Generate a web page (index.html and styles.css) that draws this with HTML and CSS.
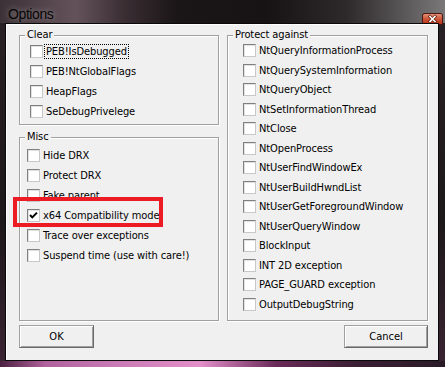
FILE: index.html
```html
<!DOCTYPE html>
<html lang="en">
<head>
    <meta charset="UTF-8">
    <title>Options</title>
    <link rel="stylesheet" href="styles.css">
</head>
<body>
    <div class="window">
        <div class="titlebar">
            <span class="title">Options</span>
            <span class="close">
                <svg width="19" height="10" viewBox="0 0 19 10">
                    <path d="M7 2.5 L12 7.5 M12 2.5 L7 7.5" stroke="#5a1408" stroke-width="3" stroke-linecap="square"/>
                    <path d="M7 2.5 L12 7.5 M12 2.5 L7 7.5" stroke="#fff" stroke-width="1.6" stroke-linecap="square"/>
                </svg>
            </span>
        </div>
        <div class="client">
            <div class="columns">
                <div class="col-left">
                    <div class="group group-clear">
                        <div class="group-title">Clear</div>
                        <label class="check"><span class="box"></span><span class="focus">PEB!IsDebugged</span></label>
                        <label class="check"><span class="box"></span>PEB!NtGlobalFlags</label>
                        <label class="check"><span class="box"></span>HeapFlags</label>
                        <label class="check"><span class="box"></span>SeDebugPrivelege</label>
                    </div>
                    <div class="group group-misc">
                        <div class="group-title">Misc</div>
                        <label class="check"><span class="box"></span>Hide DRX</label>
                        <label class="check"><span class="box"></span>Protect DRX</label>
                        <label class="check"><span class="box"></span>Fake parent</label>
                        <label class="check marked">
                            <span class="box">
                                <svg width="11" height="11" viewBox="0 0 11 11">
                                    <path d="M2 5 L4.3 7.4 L9 2.6" fill="none" stroke="#000" stroke-width="2"/>
                                </svg>
                            </span>x64 Compatibility mode
                        </label>
                        <label class="check"><span class="box"></span>Trace over exceptions</label>
                        <label class="check"><span class="box"></span>Suspend time (use with care!)</label>
                    </div>
                </div>
                <div class="group group-protect">
                    <div class="group-title">Protect against</div>
                    <label class="check"><span class="box"></span>NtQueryInformationProcess</label>
                    <label class="check"><span class="box"></span>NtQuerySystemInformation</label>
                    <label class="check"><span class="box"></span>NtQueryObject</label>
                    <label class="check"><span class="box"></span>NtSetInformationThread</label>
                    <label class="check"><span class="box"></span>NtClose</label>
                    <label class="check"><span class="box"></span>NtOpenProcess</label>
                    <label class="check"><span class="box"></span>NtUserFindWindowEx</label>
                    <label class="check"><span class="box"></span>NtUserBuildHwndList</label>
                    <label class="check"><span class="box"></span>NtUserGetForegroundWindow</label>
                    <label class="check"><span class="box"></span>NtUserQueryWindow</label>
                    <label class="check"><span class="box"></span>BlockInput</label>
                    <label class="check"><span class="box"></span>INT 2D exception</label>
                    <label class="check"><span class="box"></span>PAGE_GUARD exception</label>
                    <label class="check"><span class="box"></span>OutputDebugString</label>
                </div>
            </div>
            <div class="buttons">
                <button class="btn btn-ok">OK</button>
                <button class="btn btn-cancel">Cancel</button>
            </div>
            <div class="highlight"></div>
        </div>
        <div class="frame-bottom"></div>
    </div>
</body>
</html>
```

FILE: styles.css
```css
body {
    margin: 0;
    padding: 0;
    background: #231c20;
}

.window {
    width: 445px;
    height: 367px;
    display: flex;
    flex-direction: column;
    background: linear-gradient(180deg, #2a2226 0%, #1c1719 60%, #3a2432 100%);
}

.titlebar {
    height: 23px;
    display: flex;
    justify-content: space-between;
    background: linear-gradient(90deg, #3b3136 0%, #64525a 17%, #3a2e33 28%, #1a1517 40%, #171314 60%, #2e2a2c 78%, #6c6a6b 96%, #7a7879 100%);
}

.title {
    padding: 6px 0 0 8px;
    font-family: "Liberation Sans", Arial, sans-serif;
    font-size: 14px;
    line-height: 16px;
    letter-spacing: -0.4px;
    color: #050505;
    text-shadow: 0 0 6px rgba(255, 255, 255, 0.45);
}

.close {
    width: 19px;
    height: 10px;
    margin: 14px 3px 0 0;
    border-radius: 2px 2px 0 0;
    background: linear-gradient(180deg, #e59078 0%, #d05a3c 45%, #b8321a 100%);
    box-shadow: 0 0 0 1px #4a1a12;
}

.close svg {
    display: block;
}

.client {
    position: relative;
    height: 338px;
    box-sizing: border-box;
    margin: 0 6px 0 5px;
    padding: 11px 10px 12px 13px;
    background: #f0f0f0;
    border: 1px solid #0a0a0a;
    box-shadow: inset 1px 1px 0 #fff;
    font-family: "DejaVu Sans Condensed", "Liberation Sans", sans-serif;
    font-size: 11px;
    letter-spacing: -0.1px;
    color: #000;
}

.columns {
    display: grid;
    grid-template-columns: 200px 201px;
    column-gap: 8px;
    height: 286px;
}

.col-left {
    display: flex;
    flex-direction: column;
    gap: 12px;
}

.group {
    box-sizing: border-box;
    border: 1px solid #a0a0a0;
    box-shadow: 1px 1px 0 #fff, inset 1px 1px 0 #fff;
}

.group-clear {
    height: 90px;
    padding-left: 10px;
}

.group-misc {
    height: 184px;
    padding-left: 7px;
}

.group-protect {
    padding-left: 15px;
}

/* caption sits on the top border line */
.group-title {
    width: fit-content;
    margin-top: -7px;
    padding: 0 2px;
    line-height: 12px;
    background: #f0f0f0;
}

.group-clear .group-title {
    margin-left: -5px;
}

.group-misc .group-title {
    margin-left: -2px;
    margin-bottom: 2px;
}

.group-protect .group-title {
    margin-left: -10px;
}

.check {
    display: flex;
    align-items: center;
    height: 20px;
    white-space: nowrap;
}

.group-protect .check {
    height: 19.5px;
}

.box {
    width: 13px;
    height: 13px;
    box-sizing: border-box;
    margin-right: 3px;
    background: #fff;
    border: 1px solid;
    border-color: #7f7f7f #c8c8c8 #c8c8c8 #7f7f7f;
    box-shadow: inset 1px 1px 0 #e2e2e2;
}

.box svg {
    display: block;
}

.focus {
    padding: 0 1px;
    margin-left: -1px;
    outline: 1px dotted #000;
    line-height: 13px;
}

.buttons {
    display: flex;
    justify-content: space-between;
    margin-top: 4px;
}

.btn {
    height: 23px;
    box-sizing: border-box;
    padding: 0;
    background: #f0f0f0;
    border: 1px solid;
    border-color: #a0a0a0 #696969 #696969 #a0a0a0;
    box-shadow: inset 1px 1px 0 #fff, inset -1px -1px 0 #a0a0a0;
    font-family: inherit;
    font-size: 11px;
    color: #000;
}

.btn-ok {
    width: 75px;
}

.btn-cancel {
    width: 84px;
}

.highlight {
    position: absolute;
    left: 7px;
    top: 173px;
    width: 150px;
    height: 30px;
    box-sizing: border-box;
    border: 4px solid #ed1c24;
}

.frame-bottom {
    height: 6px;
    background: linear-gradient(90deg, #4a2040 0%, #b0609a 10%, #c878b2 25%, #e38fca 45%, #6a2a58 62%, #3a1e34 80%, #2a1a28 100%);
}
```
